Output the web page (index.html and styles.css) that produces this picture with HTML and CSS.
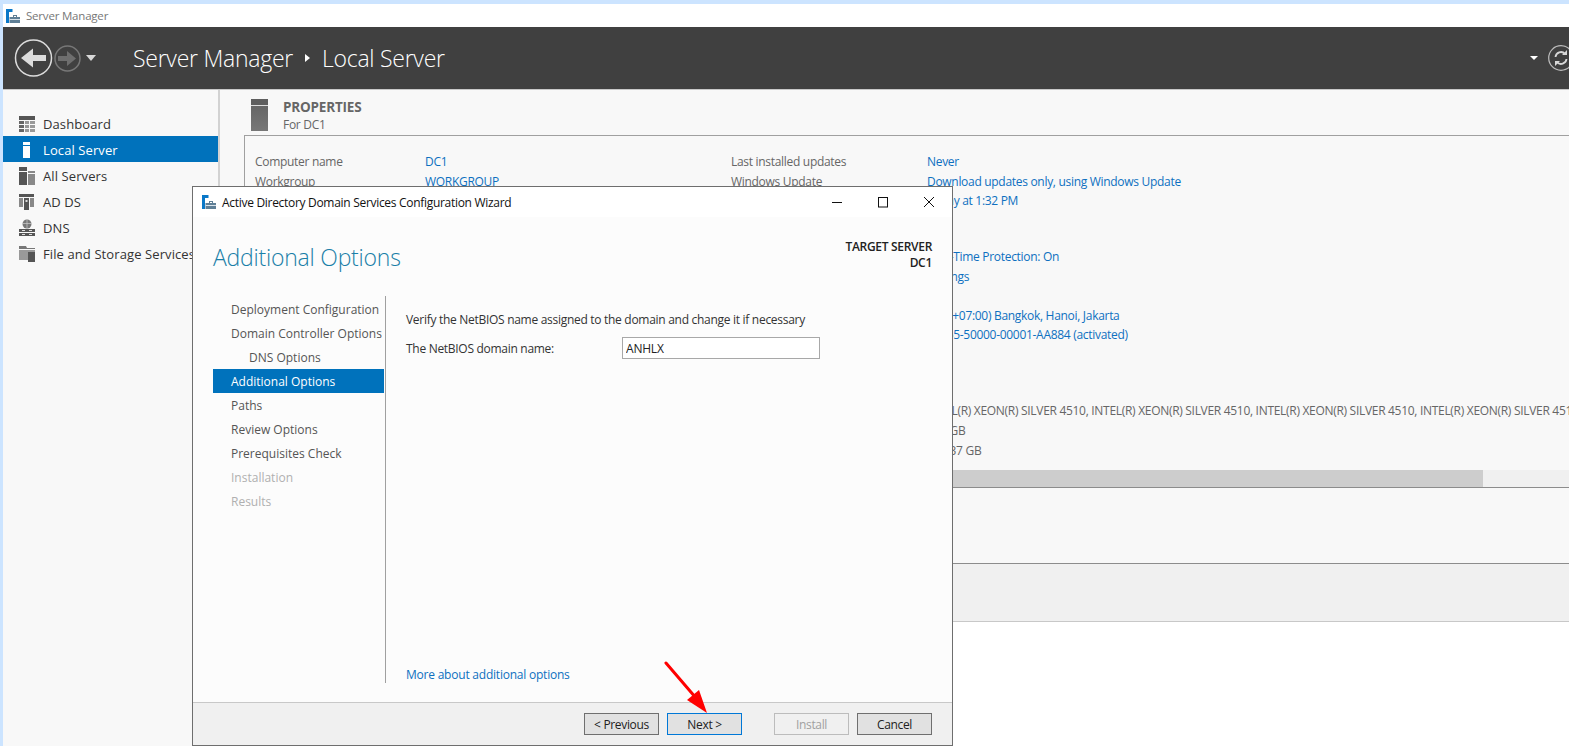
FILE: index.html
```html
<!DOCTYPE html>
<html lang="en">
<head>
  <meta charset="UTF-8" />
  <title>Server Manager</title>
  <link rel="stylesheet" href="styles.css">
</head>
<body>
  <svg class="defs" width="0" height="0">
    <symbol id="app-icon" viewBox="0 0 14 14">
      <rect x="0" y="0" width="6.500" height="3" fill="#0a78c8"/>
      <rect x="0" y="3" width="3" height="11" fill="#0a78c8"/>
      <path d="M7 6h4v2h3v6H3.500V8H7zM8 7v1h2V7z" fill="#5f7f96"/>
      <rect x="3.500" y="10" width="10.500" height="1" fill="#d8e2ea"/>
    </symbol>
  </svg>

  <div class="window">
    <div class="titlebar">
      <svg class="app-icon"><use href="#app-icon"/></svg>
      <span>Server Manager</span>
    </div>

    <header class="navbar">
      <svg class="nav-back" width="40" height="40" viewBox="0 0 40 40">
        <circle cx="19.500" cy="20" r="18" fill="none" stroke="#dcdcdc" stroke-width="1.500"/>
        <path d="M7 20l12-9.500v6.500h13v6H19v6.500z" fill="#dcdcdc"/>
      </svg>
      <svg class="nav-forward" width="27" height="27" viewBox="0 0 27 27">
        <circle cx="13.500" cy="13.500" r="12.500" fill="none" stroke="#777" stroke-width="1.500"/>
        <path d="M4 11h9V6l9 7.500-9 7.500v-5H4z" fill="#6e6e6e"/>
      </svg>
      <span class="caret nav-caret"></span>
      <div class="crumbs">
        <span>Server Manager</span>
        <span class="crumb-sep"></span>
        <span>Local Server</span>
      </div>
      <div class="nav-right">
        <span class="caret small"></span>
        <svg class="nav-refresh" width="26" height="26" viewBox="0 0 26 26">
          <circle cx="13" cy="13" r="12.300" fill="none" stroke="#bdbdbd" stroke-width="1.200"/>
          <path d="M7.500 12a5.500 5.500 0 0 1 9.500-3.200M18.500 14a5.500 5.500 0 0 1-9.500 3.200" fill="none" stroke="#d8d8d8" stroke-width="1.800"/>
          <path d="M19 5v5h-5zM7 21v-5h5z" fill="#d8d8d8"/>
        </svg>
      </div>
    </header>

    <div class="content">
      <aside class="sidebar">
        <a class="side-item" href="#">
          <svg class="side-icon" viewBox="0 0 16 16"><path d="M0 0h16v4H0z" fill="#555"/><path d="M0 5h5v3H0zM0 9h5v3H0zM0 13h5v3H0z" fill="#666"/><path d="M6 5h4v3H6zM11 5h5v3h-5zM6 9h4v3H6zM11 9h5v3h-5zM6 13h4v3H6zM11 13h5v3h-5z" fill="#999"/></svg>
          Dashboard
        </a>
        <a class="side-item active" href="#">
          <svg class="side-icon" viewBox="0 0 16 16"><path d="M4 0h7v3H4zM4 4h7v12H4z" fill="#fff"/></svg>
          Local Server
        </a>
        <a class="side-item" href="#">
          <svg class="side-icon" viewBox="0 0 16 16"><path d="M0 -1h8v4H0zM0 4h8v13H0z" fill="#555"/><path d="M9 3h7v2H9zM9 6h7v11H9z" fill="#888"/></svg>
          All Servers
        </a>
        <a class="side-item" href="#">
          <svg class="side-icon" viewBox="0 0 16 16"><path d="M0 0h15v3H0zM5 4h5v12H5z" fill="#555"/><path d="M0 4h4v9H0zM11 4h4v9h-4z" fill="#888"/><path d="M6.500 6h2v2h-2z" fill="#ddd"/></svg>
          AD DS
        </a>
        <a class="side-item" href="#">
          <svg class="side-icon" viewBox="0 0 16 16"><circle cx="8" cy="4" r="4.500" fill="#777"/><path d="M3 3.500h10M8 0v8" stroke="#ccc" stroke-width=".7"/><path d="M0 9h16v7H0z" fill="#555"/><path d="M0 12h16v1H0z" fill="#f8f8f8"/><path d="M3 10h3v1H3zM10 10h3v1h-3zM3 14h3v1H3zM10 14h3v1h-3z" fill="#ddd"/></svg>
          DNS
        </a>
        <a class="side-item" href="#">
          <svg class="side-icon" viewBox="0 0 16 16"><path d="M0 0h7l1 2h8v1H0z" fill="#777"/><path d="M0 4h16v10H0z" fill="#999"/><path d="M9 6h7v10H9z" fill="#555"/></svg>
          File and Storage Services
        </a>
      </aside>

      <main class="main">
        <div class="main-top">
          <div class="section-head">
            <div class="server-icon"></div>
            <div>
              <div class="section-title">PROPERTIES</div>
              <div class="section-sub">For DC1</div>
            </div>
          </div>

          <section class="panel">
            <div class="props">
              <div class="prop-group">
                <div class="prop"><span class="label">Computer name</span><a class="value">DC1</a><span class="label">Last installed updates</span><a class="value">Never</a></div>
                <div class="prop"><span class="label">Workgroup</span><a class="value">WORKGROUP</a><span class="label">Windows Update</span><a class="value">Download updates only, using Windows Update</a></div>
                <div class="prop"><span class="col-4"><a class="value">Today at 1:32 PM</a></span></div>
              </div>
              <div class="prop-group gap-a">
                <div class="prop"><span class="col-4"><a class="value">Real-Time Protection: On</a></span></div>
                <div class="prop"><span class="col-4"><a class="value">Settings</a></span></div>
              </div>
              <div class="prop-group gap-b">
                <div class="prop"><span class="col-4"><a class="value">(UTC+07:00) Bangkok, Hanoi, Jakarta</a></span></div>
                <div class="prop"><span class="col-4"><a class="value">00455-50000-00001-AA884 (activated)</a></span></div>
              </div>
              <div class="prop-group gap-c">
                <div class="prop"><span class="col-4 plain">INTEL(R) XEON(R) SILVER 4510, INTEL(R) XEON(R) SILVER 4510, INTEL(R) XEON(R) SILVER 4510, INTEL(R) XEON(R) SILVER 4510, INTEL(R) XEON(R) SILVER 4510</span></div>
                <div class="prop"><span class="col-4 plain">128 GB</span></div>
                <div class="prop"><span class="col-4 plain">499.37 GB</span></div>
              </div>
            </div>
            <div class="hscroll"><div class="hscroll-thumb"></div></div>
          </section>
        </div>
        <div class="band-empty"></div>
        <div class="band-grey"></div>
        <div class="band-white"></div>
      </main>
    </div>
  </div>

  <div class="dialog">
    <div class="dlg-title">
      <svg class="app-icon"><use href="#app-icon"/></svg>
      <span class="dlg-title-text">Active Directory Domain Services Configuration Wizard</span>
      <div class="win-btns">
        <svg width="12" height="12" viewBox="0 0 12 12"><path d="M1 6.500h10" stroke="#111" stroke-width="1"/></svg>
        <svg width="12" height="12" viewBox="0 0 12 12"><rect x="1.500" y="1.500" width="9" height="9.500" fill="none" stroke="#111"/></svg>
        <svg width="12" height="12" viewBox="0 0 12 12"><path d="M1 1l10 10M11 1L1 11" stroke="#111" stroke-width="1" fill="none"/></svg>
      </div>
    </div>
    <div class="dlg-head">
      <h1>Additional Options</h1>
      <div class="target">TARGET SERVER<br>DC1</div>
    </div>
    <div class="dlg-body">
      <nav class="steps">
        <a class="step">Deployment Configuration</a>
        <a class="step">Domain Controller Options</a>
        <a class="step sub">DNS Options</a>
        <a class="step current">Additional Options</a>
        <a class="step">Paths</a>
        <a class="step">Review Options</a>
        <a class="step">Prerequisites Check</a>
        <a class="step off">Installation</a>
        <a class="step off">Results</a>
      </nav>
      <div class="dlg-pane">
        <p class="verify">Verify the NetBIOS name assigned to the domain and change it if necessary</p>
        <div class="field">
          <label>The NetBIOS domain name:</label>
          <input type="text" value="ANHLX">
        </div>
        <a class="more" href="#">More about additional options</a>
      </div>
    </div>
    <div class="dlg-foot">
      <button>&lt; Previous</button>
      <button class="focus">Next &gt;</button>
      <button class="install" disabled>Install</button>
      <button>Cancel</button>
    </div>
  </div>

  <svg class="arrow" width="50" height="56" viewBox="0 0 50 56">
    <path d="M3 2l30 35" stroke="#f00" stroke-width="3" stroke-linecap="round"/>
    <path d="M44 52L24 39l12-10z" fill="#f00"/>
  </svg>
</body>
</html>
```

FILE: styles.css
```css
body {
  margin: 0;
  height: 746px;
  overflow: hidden;
  background-color: #cce4ff;
  font-family: "Open Sans", sans-serif;
  font-size: 12px;
  color: #333;
  position: relative;
}

a {
  text-decoration: none;
}

.defs {
  position: absolute;
}

.window {
  margin: 4px 0 0 3px;
  height: 742px;
  display: flex;
  flex-direction: column;
  background-color: #fff;
}

.titlebar {
  height: 23px;
  display: flex;
  align-items: center;
  padding-left: 3px;
  color: #777;
  font-size: 11.500px;
  letter-spacing: -0.2px;
  flex: none;
}

.app-icon {
  width: 14px;
  height: 14px;
  margin-right: 6px;
  flex: none;
}

.navbar {
  height: 62px;
  flex: none;
  display: flex;
  align-items: center;
  background-color: #404040;
  border-bottom: 1px solid #c8c8c8;
  color: #fff;
}

.nav-back {
  margin-left: 11px;
}

.caret {
  width: 0;
  height: 0;
  border-left: 5px solid transparent;
  border-right: 5px solid transparent;
  border-top: 6px solid #d8d8d8;
}

.caret.small {
  border-left-width: 4px;
  border-right-width: 4px;
  border-top: 4px solid #fff;
}

.nav-caret {
  margin-left: 5px;
}

.crumbs {
  margin-left: 37px;
  display: flex;
  align-items: center;
  font-size: 23px;
  font-weight: 300;
  letter-spacing: -0.26px;
}

.crumb-sep {
  width: 0;
  height: 0;
  margin: 0 12px;
  border-top: 4px solid transparent;
  border-bottom: 4px solid transparent;
  border-left: 5px solid #fff;
}

.nav-right {
  margin-left: auto;
  display: flex;
  align-items: center;
  gap: 10px;
  margin-right: -5px;
}

.content {
  flex: 1;
  display: flex;
  min-height: 0;
}

.sidebar {
  width: 215px;
  flex: none;
  padding-top: 20px;
  background-color: #f8f8f8;
  border-right: 2px solid #d2d2d2;
}

.side-item {
  height: 26px;
  box-sizing: border-box;
  padding: 1px 0 0 16px;
  display: flex;
  align-items: center;
  color: #333;
  font-size: 13px;
  letter-spacing: 0.1px;
  white-space: nowrap;
}

.side-item.active {
  background-color: #0072bc;
  color: #fff;
}

.side-icon {
  width: 16px;
  height: 16px;
  margin-right: 8px;
  flex: none;
  overflow: visible;
}

.main {
  flex: 1;
  min-width: 0;
  display: flex;
  flex-direction: column;
  overflow: hidden;
}

.main-top {
  background-color: #f8f8f8;
  padding-left: 24px;
}

.section-head {
  height: 45px;
  display: flex;
  padding-left: 7px;
  box-sizing: border-box;
  padding-top: 9px;
  gap: 15px;
}

.server-icon {
  width: 17px;
  height: 32px;
  background: linear-gradient(#5e5e5e 0, #5e5e5e 6px, #ddd 6px, #ddd 7px, #666 7px, #777 100%);
}

.section-title {
  font-weight: 700;
  color: #666;
  font-size: 13.500px;
  letter-spacing: -0.2px;
  line-height: 17px;
}

.section-sub {
  color: #666;
  line-height: 17px;
  letter-spacing: -0.3px;
}

.panel {
  border-left: 1px solid #a0a0a0;
  border-top: 1px solid #a0a0a0;
}

.props {
  height: 318px;
  padding: 16px 0 0 10px;
  overflow: hidden;
  white-space: nowrap;
  letter-spacing: -0.3px;
}

.prop {
  display: grid;
  grid-template-columns: 170px 306px 196px 1fr;
  height: 19.600px;
  line-height: 19.600px;
}

.gap-a {
  margin-top: 36.400px;
}

.gap-b {
  margin-top: 19.400px;
}

.gap-c {
  margin-top: 56.400px;
}

.label {
  color: #666;
}

.value {
  color: #0e70c0;
}

.col-4 {
  grid-column: 4;
}

.plain {
  color: #666;
}

.hscroll {
  height: 17px;
  background-color: #f0f0f0;
}

.hscroll-thumb {
  width: 1238px;
  height: 100%;
  background-color: #cdcdcd;
}

.band-empty {
  height: 75px;
  background-color: #f8f8f8;
  border-top: 1px solid #8c8c8c;
}

.band-grey {
  height: 57px;
  background-color: #f0f0f0;
  border-top: 1px solid #8c8c8c;
}

.band-white {
  flex: 1;
  background-color: #fff;
  border-top: 1px solid #c8c8c8;
}

.dialog {
  position: absolute;
  left: 192px;
  top: 186px;
  width: 759px;
  height: 558px;
  display: flex;
  flex-direction: column;
  border: 1px solid #6e6e6e;
  background-color: #fcfcfc;
}

.dlg-title {
  height: 30px;
  flex: none;
  display: flex;
  align-items: center;
  padding-left: 9px;
  background-color: #fff;
  color: #111;
}

.dlg-title-text {
  letter-spacing: -0.3px;
}

.win-btns {
  margin-left: auto;
  display: flex;
  gap: 34px;
  padding-right: 17px;
}

.dlg-head {
  height: 79px;
  flex: none;
  display: flex;
  justify-content: space-between;
  padding: 24px 20px 0;
  box-sizing: border-box;
}

.dlg-head h1 {
  margin: 0;
  font-size: 23px;
  line-height: 32px;
  font-weight: 300;
  color: #1a7fa8;
  letter-spacing: -0.22px;
}

.target {
  text-align: right;
  font-weight: 600;
  line-height: 16px;
  color: #222;
  letter-spacing: -0.3px;
  font-size: 12px;
  margin-top: -2px;
}

.dlg-body {
  flex: 1;
  display: flex;
  min-height: 0;
  padding-left: 20px;
  padding-bottom: 19px;
}

.steps {
  width: 172px;
  flex: none;
  border-right: 1px solid #a0a0a0;
  padding-top: 1px;
}

.step {
  display: block;
  height: 24px;
  line-height: 26px;
  padding-left: 18px;
  margin-right: 1px;
  color: #555;
  white-space: nowrap;
  overflow: hidden;
}

.step.sub {
  padding-left: 36px;
}

.step.current {
  background-color: #0072bc;
  color: #fff;
}

.step.off {
  color: #b0b0b0;
}

.dlg-pane {
  flex: 1;
  padding-left: 20px;
  display: flex;
  flex-direction: column;
  color: #333;
  letter-spacing: -0.29px;
}

.verify {
  margin: 15px 0 0;
  line-height: 17px;
}

.field {
  display: flex;
  align-items: center;
  margin-top: 9px;
}

.field label {
  width: 216px;
  flex: none;
}

.field input {
  width: 190px;
  height: 18px;
  padding: 1px 3px;
  border: 1px solid #a8a8a8;
  font-family: "Open Sans", sans-serif;
  font-size: 12px;
  color: #222;
  letter-spacing: -0.2px;
  background-color: #fff;
  outline: none;
}

.more {
  margin-top: auto;
  color: #0e70c0;
  line-height: 16px;
  letter-spacing: -0.22px;
}

.dlg-foot {
  height: 42px;
  flex: none;
  display: flex;
  align-items: center;
  padding-left: 391px;
  gap: 8px;
  background-color: #f0f0f0;
  border-top: 1px solid #c8c8c8;
}

.dlg-foot button {
  width: 75px;
  height: 22px;
  box-sizing: border-box;
  border: 1px solid #6f6f6f;
  background-color: #e1e1e1;
  color: #222;
  font-family: "Open Sans", sans-serif;
  font-size: 12px;
  letter-spacing: -0.33px;
  padding: 0;
}

.dlg-foot .focus {
  border-color: #0078d7;
}

.dlg-foot .install {
  margin-left: 24px;
  background-color: #f0f0f0;
  border-color: #bcbcbc;
  color: #a0a0a0;
}

.arrow {
  position: absolute;
  left: 663px;
  top: 661px;
}
```
